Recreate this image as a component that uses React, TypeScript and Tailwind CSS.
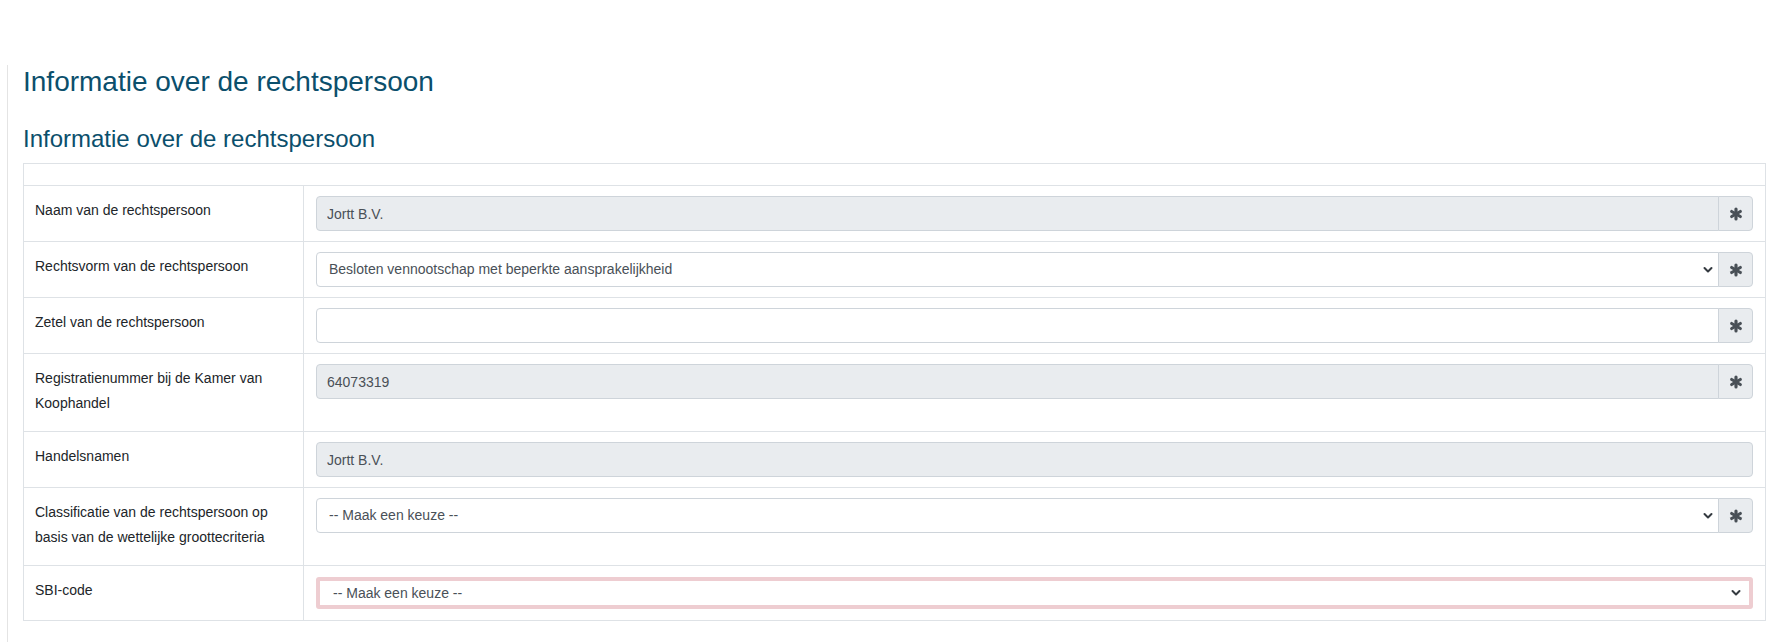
import { Asterisk } from "lucide-react";

type Field = {
  label: string;
  kind: "input" | "select";
  value: string;
  disabled?: boolean;
  required?: boolean;
  invalid?: boolean;
};

const fields: Field[] = [
  { label: "Naam van de rechtspersoon", kind: "input", value: "Jortt B.V.", disabled: true, required: true },
  { label: "Rechtsvorm van de rechtspersoon", kind: "select", value: "Besloten vennootschap met beperkte aansprakelijkheid", required: true },
  { label: "Zetel van de rechtspersoon", kind: "input", value: "", required: true },
  { label: "Registratienummer bij de Kamer van Koophandel", kind: "input", value: "64073319", disabled: true, required: true },
  { label: "Handelsnamen", kind: "input", value: "Jortt B.V.", disabled: true },
  { label: "Classificatie van de rechtspersoon op basis van de wettelijke groottecriteria", kind: "select", value: "-- Maak een keuze --", required: true },
  { label: "SBI-code", kind: "select", value: "-- Maak een keuze --", invalid: true },
];

function Chevron() {
  return (
    <svg width="10" height="7" viewBox="0 0 10 7" className="pointer-events-none absolute top-1/2 right-[6px] -translate-y-1/2">
      <path d="M1.5 1.5 5 5l3.5-3.5" fill="none" stroke="#343a40" strokeWidth="2" strokeLinecap="round" strokeLinejoin="round" />
    </svg>
  );
}

function Control({ field }: { field: Field }) {
  const rounded = field.required ? "rounded-l-[4px]" : "rounded-[4px]";

  if (field.kind === "select") {
    if (field.invalid) {
      return (
        <div className="relative flex-1">
          <select
            defaultValue={field.value}
            className="h-[32px] w-full appearance-none rounded-[3px] border-4 border-[#eecdd1] bg-white pl-[13px] text-[14px] text-[#495057] outline-none"
          >
            <option>{field.value}</option>
          </select>
          <span className="pointer-events-none absolute inset-y-0 right-[6px] w-[12px]">
            <Chevron />
          </span>
        </div>
      );
    }
    return (
      <div className="relative flex-1">
        <select
          defaultValue={field.value}
          className={`h-[35px] w-full appearance-none border border-[#ced4da] bg-white pl-[12px] text-[14px] text-[#495057] outline-none ${rounded}`}
        >
          <option>{field.value}</option>
        </select>
        <Chevron />
      </div>
    );
  }

  return (
    <input
      readOnly
      disabled={field.disabled}
      value={field.value}
      className={`h-[35px] min-w-0 flex-1 border border-[#ced4da] pl-[10px] text-[14px] text-[#495057] outline-none ${rounded} ${
        field.disabled ? "bg-[#e9ecef]" : "bg-white"
      }`}
    />
  );
}

function Row({ field }: { field: Field }) {
  return (
    <div className="flex border-t border-[#dee2e6]">
      <div className="w-[280px] shrink-0 border-r border-[#dee2e6] pt-3 pr-3 pb-[15px] pl-[11px] text-[14px] leading-[25px] text-[#212529]">
        {field.label}
      </div>
      <div className={`flex flex-1 items-start px-3 ${field.invalid ? "pt-[11px] pb-[11px]" : "py-[10px]"}`}>
        <div className="flex w-full">
          <Control field={field} />
          {field.required && (
            <div className="-ml-px flex h-[35px] w-[35px] items-center justify-center rounded-r-[4px] border border-[#ced4da] bg-[#e9ecef] text-[#495057]">
              <Asterisk size={20} strokeWidth={3.8} />
            </div>
          )}
        </div>
      </div>
    </div>
  );
}

export default function App() {
  return (
    <div className="min-h-screen bg-white pt-[49px] font-['Liberation_Sans',Arial,sans-serif]">
      <div className="ml-[7px] min-h-[593px] border-l border-[#e4e4e4] pr-3 pl-[15px]">
        <h1 className="mt-[16px] text-[28px] leading-[1.2] font-normal text-[#0b4f6c]">
          Informatie over de rechtspersoon
        </h1>
        <h2 className="mt-[26px] mb-[10px] text-[24px] leading-[1.2] font-normal text-[#0b4f6c]">
          Informatie over de rechtspersoon
        </h2>
        <div className="border-x border-b border-[#dee2e6]">
          <div className="h-[22px] border-t border-[#dee2e6]" />
          {fields.map((field) => (
            <Row key={field.label} field={field} />
          ))}
        </div>
      </div>
    </div>
  );
}
